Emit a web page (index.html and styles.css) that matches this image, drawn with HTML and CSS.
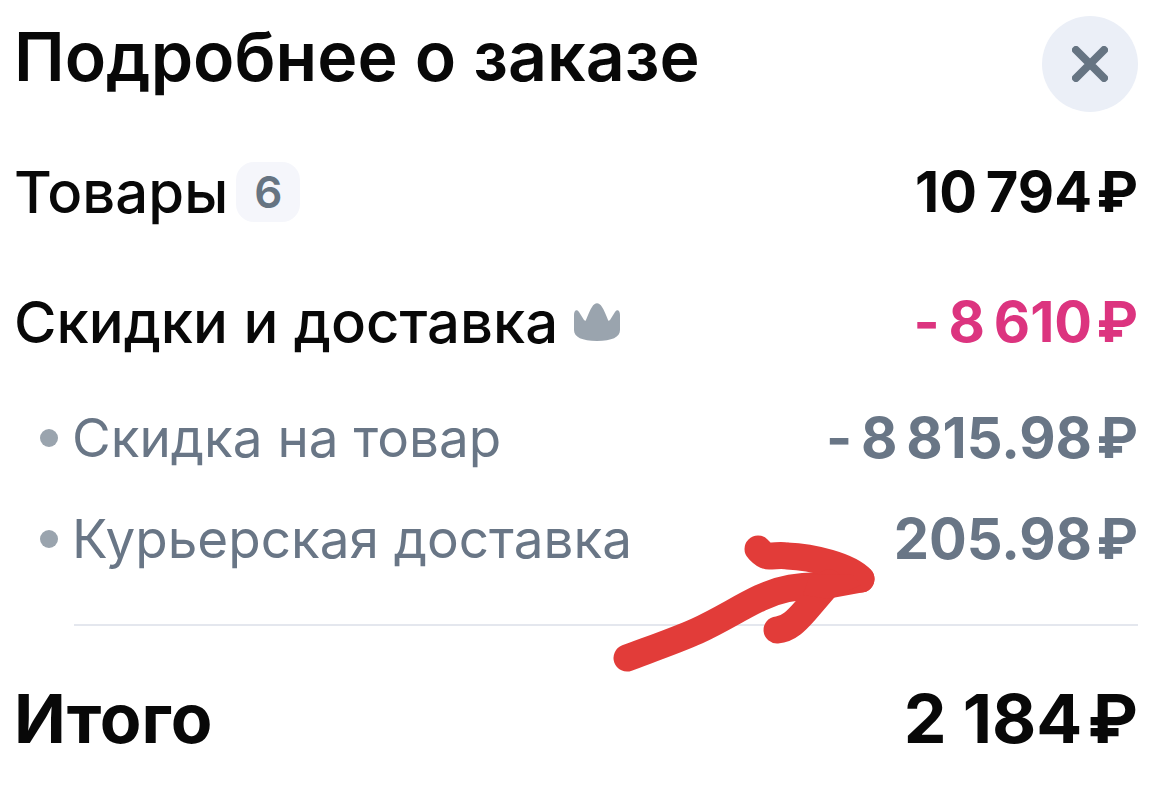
FILE: index.html
```html
<!DOCTYPE html>
<html lang="ru">
<head>
	<title>Подробнее о заказе</title>
	<meta charset="utf-8">
	<meta name="viewport" content="width=device-width, initial-scale=1">
	<link rel="stylesheet" href="styles.css">
</head>
<body>
	<main class="order">
		<header class="order_header">
			<h1 class="order_title">Подробнее о заказе</h1>
			<button class="close_btn" type="button" aria-label="Закрыть">
				<svg width="36" height="36" viewBox="0 0 36 36">
					<path d="M4 4L32 32M32 4L4 32"/>
				</svg>
			</button>
		</header>
		<div class="row">
			<div class="row_label">Товары <span class="badge">6</span></div>
			<div class="price">10&#8201;794&#8202;₽</div>
		</div>
		<div class="row">
			<div class="row_label">Скидки и доставка
				<svg class="crown" width="46" height="38" viewBox="0 0 46 38">
					<path d="M0 12C0 7 3 6 5 9L10 17C11 18 12 18 12 17C14 12 16 7 18 4C21 -1 25 -1 28 4C30 7 32 12 34 17C34 18 35 18 36 17L41 9C43 6 46 7 46 12V27C46 34 38 38 23 38S0 34 0 27Z"/>
				</svg>
			</div>
			<div class="price price_sale">-&#8201;8&#8201;610&#8202;₽</div>
		</div>
		<ul class="details">
			<li class="detail">
				<span class="detail_label">Скидка на товар</span>
				<span class="price">-&#8201;8&#8201;815.98&#8202;₽</span>
			</li>
			<li class="detail">
				<span class="detail_label">Курьерская доставка</span>
				<span class="price">205.98&#8202;₽</span>
				<svg class="arrow" width="264" height="138" viewBox="0 0 264 138">
					<path d="M14 123C38 114 64 105 84 96C108 85 126 73 147 63C166 54 186 50 210 51L248 44"/>
					<path d="M145 14C148 17 151 21 156 21C163 21 168 20 174 21C200 22 236 31 248 44"/>
					<path d="M164 95C176 94 184 85 192 76L216 48"/>
					<path class="arrow_head" d="M197 39L240 40L248 50L216 64L190 60Z"/>
				</svg>
			</li>
		</ul>
		<div class="total">
			<div>Итого</div>
			<div>2 184&#8202;₽</div>
		</div>
	</main>
</body>
</html>
```

FILE: styles.css
```css
*{
	box-sizing:border-box;
	margin:0;
	padding:0;
}
body{
	background:#fff;
	color:#080808;
	font-family:Inter,"Liberation Sans",sans-serif;
	font-feature-settings:"calt" 0;
}
.order{
	padding:16px 35px 24px 14px;
}
.order_header{
	display:flex;
	justify-content:space-between;
	height:96px;
	margin-bottom:48px;
}
.order_title{
	font-size:68px;
	font-weight:600;
	line-height:80px;
	white-space:nowrap;
}
.close_btn{
	display:flex;
	align-items:center;
	justify-content:center;
	width:96px;
	height:96px;
	border:none;
	border-radius:50%;
	background:#ebeff7;
	cursor:pointer;
}
.close_btn path{
	fill:none;
	stroke:#667482;
	stroke-width:8;
	stroke-linecap:round;
}
.row{
	display:flex;
	justify-content:space-between;
	height:64px;
	margin-bottom:66px;
	font-size:58px;
	line-height:64px;
	white-space:nowrap;
}
.row_label{
	display:flex;
	align-items:center;
	gap:8px;
	font-weight:500;
}
.badge{
	width:64px;
	height:60px;
	border-radius:18px;
	background:#f5f6fb;
	color:#667482;
	font-size:44px;
	font-weight:600;
	line-height:60px;
	text-align:center;
}
.crown{
	margin-left:8px;
	fill:#9aa4ae;
}
.price{
	font-size:56px;
	font-weight:700;
}
.price_sale{
	color:#dc347f;
}
.details{
	margin:-14px 0 52px 26px;
	padding-bottom:55px;
	list-style:none;
	color:#697686;
	background:linear-gradient(#e4e7ee,#e4e7ee) right bottom / calc(100% - 34px) 2px no-repeat;
}
.detail{
	position:relative;
	display:flex;
	justify-content:space-between;
	height:64px;
	line-height:64px;
	white-space:nowrap;
}
.detail + .detail{
	margin-top:37px;
}
.detail_label{
	display:flex;
	align-items:center;
	gap:14px;
	font-size:53px;
}
.detail_label::before{
	content:"";
	width:18px;
	height:18px;
	border-radius:50%;
	background:#9aa4ae;
}
/* hand drawn pointer over the delivery price */
.arrow{
	position:absolute;
	top:28px;
	right:261px;
	fill:none;
	stroke:#e23c39;
	stroke-width:27;
	stroke-linecap:round;
	stroke-linejoin:round;
}
.arrow_head{
	fill:#e23c39;
	stroke:none;
}
.total{
	display:flex;
	justify-content:space-between;
	font-size:68px;
	font-weight:700;
	line-height:80px;
	white-space:nowrap;
}
```
